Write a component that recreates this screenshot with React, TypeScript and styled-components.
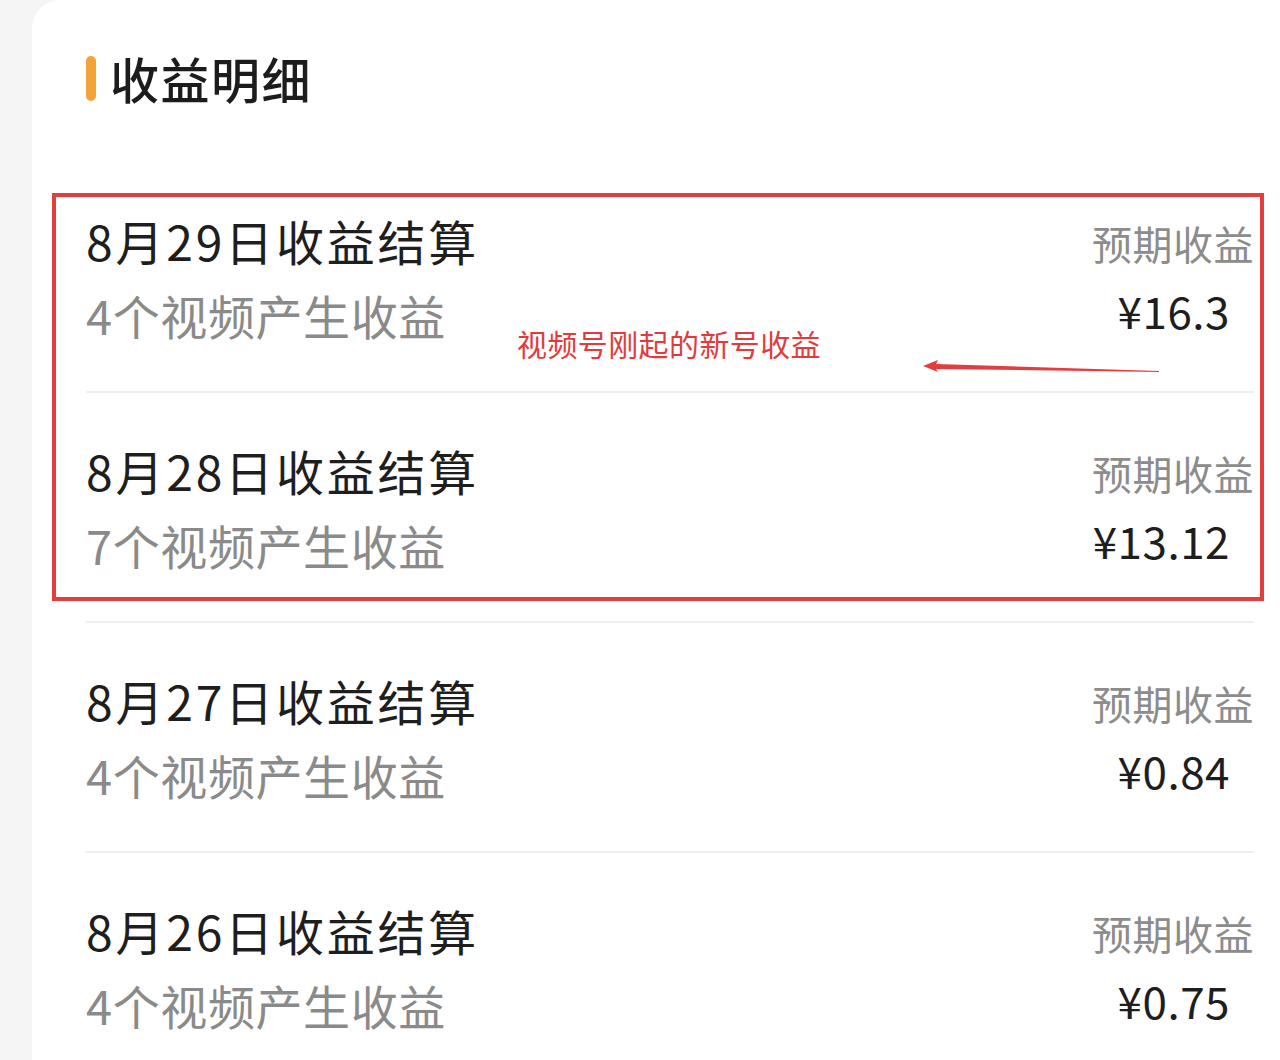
import React from "react";
import styled, { createGlobalStyle } from "styled-components";

const Global = createGlobalStyle`
  html, body { margin: 0; padding: 0; background: #f5f5f5; }
  body { font-family: "Noto Sans CJK SC", "Noto Sans", sans-serif; }
`;

const Page = styled.div`
  display: flex;
  min-height: 1060px;
  background: #f5f5f5;
`;

const Gutter = styled.div`
  width: 32px;
  flex: none;
`;

const Card = styled.main`
  flex: 1;
  background: #ffffff;
  border-top-left-radius: 28px;
  padding: 0 26px 0 54px;
  overflow: hidden;
  height: 1060px;
`;

const Header = styled.header`
  display: flex;
  align-items: center;
  gap: 14px;
  padding: 48px 0 55px;
`;

const Accent = styled.span`
  width: 10px;
  height: 45px;
  border-radius: 5px;
  background: #f2a33a;
`;

const Title = styled.h1`
  margin: 0;
  font-size: 49px;
  line-height: 60px;
  font-weight: 500;
  letter-spacing: 1.5px;
  color: #1c1c1c;
`;

const Group = styled.div`
  position: relative;
`;

const Row = styled.div`
  display: flex;
  justify-content: space-between;
  align-items: flex-start;
  padding: 50px 0 49px;
  border-bottom: 2px solid #efefef;
`;

const Left = styled.div`
  display: flex;
  flex-direction: column;
  gap: 21px;
`;

const RowTitle = styled.div`
  font-size: 48px;
  line-height: 54px;
  letter-spacing: 2.8px;
  color: #1e1e1e;
`;

const RowSub = styled.div`
  font-size: 47px;
  line-height: 54px;
  letter-spacing: 0.6px;
  color: #8a8a8a;
`;

const Right = styled.div`
  display: flex;
  flex-direction: column;
  align-items: flex-end;
  gap: 13px;
  margin-top: 3px;
`;

const Label = styled.div`
  font-size: 40px;
  line-height: 54px;
  letter-spacing: 0.5px;
  color: #8c8c8c;
`;

const Amount = styled.div`
  font-size: 44px;
  line-height: 54px;
  letter-spacing: 0.5px;
  color: #1e1e1e;
  padding-right: 24px;
`;

const RedBox = styled.div`
  position: absolute;
  top: 30px;
  left: -34px;
  right: -10px;
  bottom: 22px;
  border: 4px solid #e43d3d;
  pointer-events: none;
`;

const Note = styled.div`
  position: absolute;
  left: 431px;
  top: 162px;
  font-size: 30px;
  line-height: 36px;
  letter-spacing: 0.4px;
  color: #e23b3b;
  white-space: nowrap;
`;

const Arrow = styled.svg`
  position: absolute;
  left: 837px;
  top: 196px;
  width: 236px;
  height: 18px;
`;

type Item = { date: string; count: number; amount: string };

const items: Item[] = [
  { date: "8月29日", count: 4, amount: "¥16.3" },
  { date: "8月28日", count: 7, amount: "¥13.12" },
  { date: "8月27日", count: 4, amount: "¥0.84" },
  { date: "8月26日", count: 4, amount: "¥0.75" },
];

const EntryRow = ({ item }: { item: Item }) => (
  <Row>
    <Left>
      <RowTitle>{item.date}收益结算</RowTitle>
      <RowSub>{item.count}个视频产生收益</RowSub>
    </Left>
    <Right>
      <Label>预期收益</Label>
      <Amount>{item.amount}</Amount>
    </Right>
  </Row>
);

export default function App() {
  return (
    <>
      <Global />
      <Page>
        <Gutter />
        <Card>
          <Header>
            <Accent />
            <Title>收益明细</Title>
          </Header>
          <Group>
            <EntryRow item={items[0]} />
            <EntryRow item={items[1]} />
            <RedBox />
            <Note>视频号刚起的新号收益</Note>
            <Arrow viewBox="0 0 236 18">
              <polygon
                points="0,7 15,1 13,5 236,12 236,13 13,10 15,13"
                fill="#e43d3d"
              />
            </Arrow>
          </Group>
          <EntryRow item={items[2]} />
          <EntryRow item={items[3]} />
        </Card>
      </Page>
    </>
  );
}
